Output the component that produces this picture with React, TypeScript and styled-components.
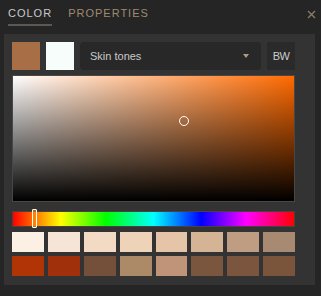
import React from "react";
import styled, { createGlobalStyle } from "styled-components";

const Global = createGlobalStyle`
  html, body { margin: 0; padding: 0; background: #252525; }
  #root { width: 321px; height: 296px; }
`;

const Frame = styled.div`
  width: 321px;
  height: 296px;
  background: #252525;
  font-family: "Liberation Sans", Arial, sans-serif;
  display: flex;
  flex-direction: column;
  box-sizing: border-box;
`;

const Header = styled.div`
  height: 34px;
  display: flex;
  align-items: flex-start;
  padding-left: 8px;
  padding-right: 5px;
  box-sizing: border-box;
  gap: 16px;
`;

const Tab = styled.div<{ $active?: boolean }>`
  font-size: 11px;
  line-height: 12px;
  letter-spacing: 1px;
  padding-top: 7px;
  padding-bottom: 5px;
  color: ${(p) => (p.$active ? "#c9c9c9" : "#a08a6e")};
  border-bottom: 2px solid ${(p) => (p.$active ? "#5c5752" : "transparent")};
`;

const Close = styled.div`
  margin-left: auto;
  padding-top: 10px;
  display: flex;
`;

const Panel = styled.div`
  margin-left: 4px;
  width: 311px;
  height: 251px;
  background: #333333;
  padding: 8px 20px 8px 8px;
  box-sizing: border-box;
  display: flex;
  flex-direction: column;
`;

const TopRow = styled.div`
  display: flex;
  gap: 6px;
  height: 28px;
`;

const Swatch = styled.div<{ $c: string }>`
  width: 28px;
  height: 28px;
  background: ${(p) => p.$c};
`;

const Dropdown = styled.div`
  flex: 1;
  height: 28px;
  background: #282828;
  border-radius: 4px;
  display: flex;
  align-items: center;
  padding: 0 12px 0 10px;
  box-sizing: border-box;
  font-size: 11px;
  color: #c8c8c8;
`;

const Arrow = styled.div`
  margin-left: auto;
  width: 0;
  height: 0;
  border-left: 3px solid transparent;
  border-right: 3px solid transparent;
  border-top: 4px solid #b09a80;
`;

const BW = styled.div`
  width: 28px;
  height: 28px;
  background: #2a2a2a;
  display: flex;
  align-items: center;
  justify-content: center;
  font-size: 11px;
  letter-spacing: -0.5px;
  color: #cccccc;
`;

const SVArea = styled.div<{ $hue: string }>`
  margin-top: 5px;
  height: 127px;
  position: relative;
  box-sizing: border-box;
  border: 1px solid #4a4644;
  background: linear-gradient(to top, #000, rgba(0, 0, 0, 0)),
    linear-gradient(to right, #fff, ${(p) => p.$hue});
`;

const Picker = styled.div`
  position: absolute;
  width: 8px;
  height: 8px;
  border: 1.5px solid #fff;
  border-radius: 50%;
  transform: translate(-50%, -50%);
`;

const HueBar = styled.div`
  margin-top: 9px;
  height: 16px;
  position: relative;
  box-sizing: border-box;
  border: 1px solid #4a4040;
  background: linear-gradient(
    to right,
    #ff0000 0%,
    #ffff00 17%,
    #00ff00 33%,
    #00ffff 50%,
    #0000ff 67%,
    #ff00ff 83%,
    #ff0000 100%
  );
`;

const HueHandle = styled.div`
  position: absolute;
  top: -3px;
  width: 3px;
  height: 17px;
  border: 1px solid #fff;
  border-radius: 1px;
  background: rgba(255, 140, 0, 0.6);
`;

const Grid = styled.div`
  margin-top: 5px;
  display: grid;
  grid-template-columns: repeat(8, 1fr);
  grid-auto-rows: 20px;
  gap: 4px;
`;

const Cell = styled.div<{ $c: string }>`
  background: ${(p) => p.$c};
`;

const colors = [
  "#fcefe4", "#f6e5d6", "#f2dac4", "#eed3b9", "#e5c4a7", "#d5b395", "#bf9d82", "#a88a73",
  "#b03406", "#a0300c", "#744f39", "#ac8a68", "#bf9479", "#7b563f", "#7b553e", "#7a543b",
];

export default function App() {
  return (
    <Frame>
      <Global />
      <Header>
        <Tab $active>COLOR</Tab>
        <Tab>PROPERTIES</Tab>
        <Close>
          <svg width="9" height="9" viewBox="0 0 9 9">
            <path d="M1 1L8 8M8 1L1 8" stroke="#8a7a68" strokeWidth="1.4" />
          </svg>
        </Close>
      </Header>
      <Panel>
        <TopRow>
          <Swatch $c="#a86e45" />
          <Swatch $c="#f7fdfb" />
          <Dropdown>
            Skin tones
            <Arrow />
          </Dropdown>
          <BW>BW</BW>
        </TopRow>
        <SVArea $hue="#ff6a00">
          <Picker style={{ left: "60.8%", top: "36%" }} />
        </SVArea>
        <HueBar>
          <HueHandle style={{ left: "6.9%" }} />
        </HueBar>
        <Grid>
          {colors.map((c, i) => (
            <Cell key={i} $c={c} />
          ))}
        </Grid>
      </Panel>
    </Frame>
  );
}
